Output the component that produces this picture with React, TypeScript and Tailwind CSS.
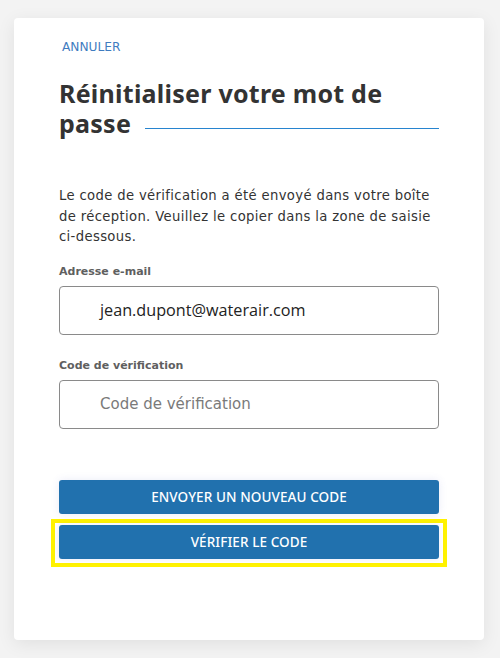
import React from "react";

export default function App() {
  const dv = { fontFamily: '"DejaVu Sans", "Noto Sans", sans-serif' };
  const noto = { fontFamily: '"Noto Sans", "Open Sans", sans-serif' };
  return (
    <div className="min-h-[658px] w-[500px] bg-[#f3f3f3] pt-[18px] pb-[18px]" style={dv}>
      <div className="ml-[14px] w-[470px] h-[622px] rounded-[4px] bg-white shadow-[0_4px_18px_rgba(0,0,0,0.08)] px-[45px] pt-[21px]">
        <div className="pl-[3px] text-[12.2px] leading-[16px] text-[#3f7cc0]">ANNULER</div>
        <div className="mt-[23px] text-[#333333] text-[25px] font-bold leading-[30px] tracking-[0.25px]" style={noto}>
          <div>Réinitialiser votre mot de</div>
          <div className="flex items-end">
            <span>passe</span>
            <span className="ml-[14px] mb-[9px] h-px flex-1 bg-[#2784cf]"></span>
          </div>
        </div>
        <p className="mt-[48px] text-[13.2px] leading-[20.5px] tracking-[0.35px] text-[#333333]">
          Le code de vérification a été envoyé dans votre boîte
          <br />
          de réception. Veuillez le copier dans la zone de saisie
          <br />
          ci-dessous.
        </p>
        <div className="mt-[17.5px] text-[11px] font-bold leading-[14px] text-[#5f5f5f]">Adresse e-mail</div>
        <div
          className="mt-[7px] flex h-[49px] items-center rounded-[4px] border border-[#8a8a8a] pl-[40px] text-[16.2px] text-[#222222]"
          style={{ fontFamily: '"Open Sans", sans-serif' }}
        >
          jean.dupont@waterair.com
        </div>
        <div className="mt-[24px] text-[11px] font-bold leading-[14px] text-[#5f5f5f]">Code de vérification</div>
        <div className="mt-[7px] flex h-[49px] items-center rounded-[4px] border border-[#8a8a8a] pl-[40px] text-[15px] text-[#7a7a7a]">
          Code de vérification
        </div>
        <div className="mt-[51px] flex flex-col" style={noto}>
          <button className="flex h-[34px] w-full items-center justify-center rounded-[3px] bg-[#2171ae] text-[13.5px] font-medium tracking-[0.1px] text-white shadow-[0_0_8px_rgba(80,90,200,0.12)]">
            ENVOYER UN NOUVEAU CODE
          </button>
          <div className="-mx-[8px] mt-[5px] border-4 border-[#fff200] px-[4px] pt-[2px] pb-[4px]">
            <button className="flex h-[34px] w-full items-center justify-center rounded-[3px] bg-[#2171ae] text-[13.5px] font-medium tracking-[0.1px] text-white shadow-[0_0_6px_rgba(80,90,200,0.12)]">
              VÉRIFIER LE CODE
            </button>
          </div>
        </div>
      </div>
    </div>
  );
}
